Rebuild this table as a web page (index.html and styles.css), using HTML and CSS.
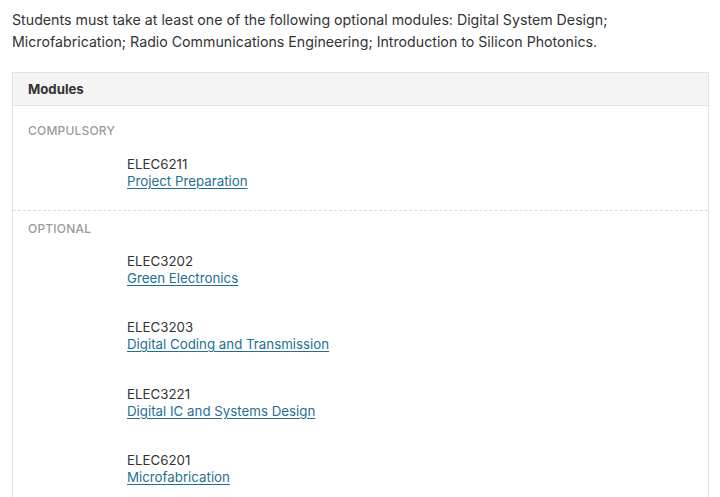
FILE: index.html
```html
<!DOCTYPE html>
<html>
<head>
<meta charset="utf-8">
<link rel="stylesheet" href="styles.css">
</head>
<body>
<p class="intro">Students must take at least one of the following optional modules: Digital System Design; Microfabrication; Radio Communications Engineering; Introduction to Silicon Photonics.</p>
<div class="panel">
  <div class="panel-head">Modules</div>
  <div class="group group-first">
    <div class="group-label">Compulsory</div>
    <ul class="items">
      <li class="item"><div class="code">ELEC6211</div><a class="title" href="#">Project Preparation</a></li>
    </ul>
  </div>
  <div class="group group-dashed">
    <div class="group-label">Optional</div>
    <ul class="items items-optional">
      <li class="item"><div class="code">ELEC3202</div><a class="title" href="#">Green Electronics</a></li>
      <li class="item"><div class="code">ELEC3203</div><a class="title" href="#">Digital Coding and Transmission</a></li>
      <li class="item"><div class="code">ELEC3221</div><a class="title" href="#">Digital IC and Systems Design</a></li>
      <li class="item"><div class="code">ELEC6201</div><a class="title" href="#">Microfabrication</a></li>
    </ul>
  </div>
</div>
</body>
</html>
```
FILE: styles.css
```css
html, body {
  margin: 0;
  padding: 0;
  background: #ffffff;
}
body {
  font-family: Inter, "Liberation Sans", Arial, sans-serif;
  color: #333333;
  padding: 0 11px 0 12px;
}
.intro {
  margin: 9px 0 19px 0;
  font-size: 14.2px;
  line-height: 22px;
  color: #333;
}
.panel {
  border: 1px solid #e2e2e2;
  border-bottom: none;
}
.panel-head {
  background: #f4f4f4;
  height: 32px;
  line-height: 32px;
  padding: 0 15px;
  font-size: 13.2px;
  font-weight: 700;
  color: #333;
  border-bottom: 1px solid #e2e2e2;
}
.group {
  padding: 10px 15px 20px 15px;
}
.group-first {
  padding-top: 17px;
}
.group-dashed {
  border-top: 1px dashed #dcdcdc;
}
.group-label {
  font-size: 12px;
  line-height: 16px;
  text-transform: uppercase;
  color: #9a9a9a;
  font-weight: 500;
  letter-spacing: 0.2px;
}
.items {
  list-style: none;
  margin: 16.5px 0 0 0;
  padding: 0 0 0 99px;
  display: flex;
  flex-direction: column;
  gap: 32.67px;
}
.items-optional {
  margin-top: 16px;
}
.item {
  font-size: 13.3px;
  line-height: 17px;
}
.code {
  color: #333;
}
.title {
  color: #1f6f93;
  text-decoration: underline;
  text-underline-offset: 2px;
}
```
